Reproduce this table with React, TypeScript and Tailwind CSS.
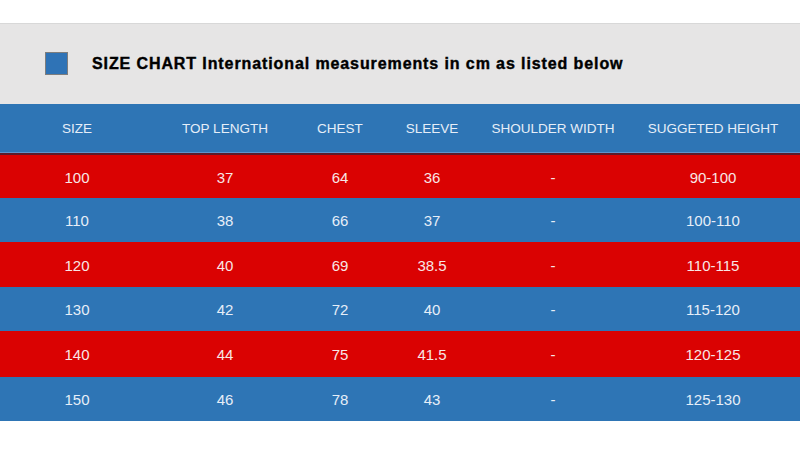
import React from 'react';

const headers = ['SIZE', 'TOP LENGTH', 'CHEST', 'SLEEVE', 'SHOULDER WIDTH', 'SUGGETED HEIGHT'];

const rows = [
  ['100', '37', '64', '36', '-', '90-100'],
  ['110', '38', '66', '37', '-', '100-110'],
  ['120', '40', '69', '38.5', '-', '110-115'],
  ['130', '42', '72', '40', '-', '115-120'],
  ['140', '44', '75', '41.5', '-', '120-125'],
  ['150', '46', '78', '43', '-', '125-130'],
];

const heights = ['h-[43px]', 'h-[44px]', 'h-[45px]', 'h-[44px]', 'h-[46px]', 'h-[44px]'];

const grid = 'grid grid-cols-[154px_142px_88px_96px_146px_174px] items-center text-center pt-[3px]';

export default function App() {
  return (
    <div className="w-[800px] h-[449px] bg-white font-['Liberation_Sans',Arial,sans-serif] overflow-hidden">
      {/* top spacer */}
      <div className="h-[24px] border-b border-[#d8d8d8]" />

      {/* title band */}
      <div className="h-[80px] bg-[#e6e5e5] flex items-center pl-[45px] pb-[1px]">
        <div className="w-[23px] h-[23px] bg-[#2f73b6] border border-[#7d7d7d]" />
        <h1 className="ml-[24px] text-[16px] font-bold text-black tracking-[0.9px] leading-none [-webkit-text-stroke:0.4px_#000]">
          SIZE CHART International measurements in cm as listed below
        </h1>
      </div>

      {/* header row */}
      <div className={`${grid} h-[49px] bg-[#2e75b5] text-[#e6eef8] text-[13.5px] border-b border-[#5d94cc]`}>
        {headers.map(h => (
          <div key={h}>{h}</div>
        ))}
      </div>
      <div className="h-[2px] bg-[#5b1b2b]" />

      {/* data rows */}
      {rows.map((r, i) => (
        <div
          key={r[0]}
          className={`${grid} ${heights[i]} text-[15px] ${
            i % 2 === 0 ? 'bg-[#da0202] text-[#f8e6e6]' : 'bg-[#2e75b5] text-[#e6eef8]'
          }`}
        >
          {r.map((v, j) => (
            <div key={j}>{v}</div>
          ))}
        </div>
      ))}
    </div>
  );
}
